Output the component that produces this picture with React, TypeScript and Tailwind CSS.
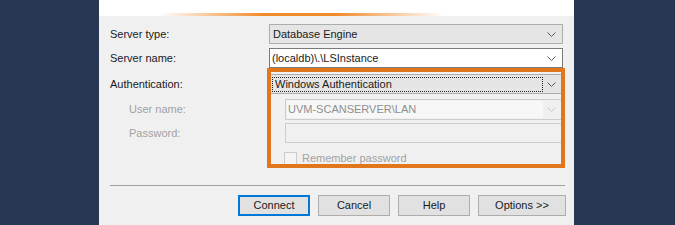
import type { ReactNode } from "react";

const font = "font-['Liberation_Sans',Arial,sans-serif]";

function Chevron({ light }: { light?: boolean }) {
  return (
    <svg width="9" height="5" viewBox="0 0 9 5" className="shrink-0">
      <path
        d="M0.5 0.5 L4.5 4.5 L8.5 0.5"
        fill="none"
        stroke={light ? "#c4c4c4" : "#5a5a5a"}
        strokeWidth="1"
      />
    </svg>
  );
}

function Row({
  label,
  indent,
  muted,
  className,
  children,
}: {
  label: string;
  indent?: boolean;
  muted?: boolean;
  className?: string;
  children: ReactNode;
}) {
  return (
    <div className={`flex items-center ${className ?? ""}`}>
      <div
        className={`shrink-0 ${indent ? "w-[140px] ml-[19px]" : "w-[159px]"} ${
          muted ? "text-[#a2a2a2]" : "text-[#1a1a1a]"
        }`}
      >
        {label}
      </div>
      {children}
    </div>
  );
}

function Button({ children, primary, wide }: { children: ReactNode; primary?: boolean; wide?: boolean }) {
  return (
    <div
      className={`h-[21px] ${wide ? "w-[88px]" : "w-[72px]"} flex items-center justify-center bg-[#e1e1e1] text-[#1a1a1a] ${
        primary ? "border-2 border-[#0078d7]" : "border border-[#adadad]"
      }`}
    >
      {children}
    </div>
  );
}

export default function App() {
  return (
    <div className={`w-[675px] h-[225px] bg-[#283752] flex overflow-hidden ${font} text-[11px]`}>
      <div className="relative ml-[99px] w-[475px] h-full bg-[#f0f0f0] flex flex-col">
        <div className="h-[13px] bg-white shrink-0" />
        <div className="h-[3px] shrink-0 bg-white">
          <div className="h-full bg-[linear-gradient(to_right,rgba(240,138,42,0)_60px,#f08a2a_165px,#f08a2a_235px,rgba(240,138,42,0)_345px)]" />
        </div>

        <div className="pl-[11px] flex flex-col">
          <Row label="Server type:" className="mt-[8px]">
            <div className="h-[20px] w-[294px] bg-[#e5e5e5] border border-[#adadad] flex items-center justify-between pl-[3px] pr-[6px] text-[#1a1a1a]">
              <span>Database Engine</span>
              <Chevron />
            </div>
          </Row>

          <Row label="Server name:" className="mt-[4px]">
            <div className="h-[20px] w-[294px] bg-white border border-[#7a7a7a] flex items-center justify-between pl-[2px] pr-[6px] text-[#1a1a1a]">
              <span>(localdb)\.\LSInstance</span>
              <Chevron />
            </div>
          </Row>

          <Row label="Authentication:" className="mt-[6px]">
            <div className="h-[20px] w-[294px] bg-[#e5e5e5] border border-[#adadad] flex items-center justify-between pl-[2px] pr-[6px] text-[#1a1a1a]">
              <span className="h-[15px] w-[271px] border border-dotted border-[#222] flex items-center pl-[2px]">
                Windows Authentication
              </span>
              <Chevron />
            </div>
          </Row>

          <Row label="User name:" indent muted className="mt-[5px]">
            <div className="ml-[16px] h-[21px] w-[278px] bg-[#f0f0f0] border border-[#cccccc] flex items-center justify-between pl-[1px] pr-[6px]">
              <span className="h-[17px] w-[256px] bg-[#f7f7f7] flex items-center pl-[1px] text-[#8e8e8e]">
                UVM-SCANSERVER\LAN
              </span>
              <Chevron light />
            </div>
          </Row>

          <Row label="Password:" indent muted className="mt-[3px]">
            <div className="ml-[16px] h-[20px] w-[278px] bg-[#f0f0f0] border border-[#cccccc]" />
          </Row>

          <div className="flex items-center mt-[7px] ml-[174px] text-[#a2a2a2]">
            <div className="w-[13px] h-[13px] border border-[#cccccc] bg-[#f4f4f4]" />
            <span className="ml-[5px]">Remember password</span>
          </div>

          <div className="mt-[18px] w-[455px] h-[1px] bg-[#a0a0a0]" />

          <div className="mt-[9px] flex pl-[128px] gap-[8px]">
            <Button primary>Connect</Button>
            <Button>Cancel</Button>
            <Button>Help</Button>
            <Button wide>Options &gt;&gt;</Button>
          </div>
        </div>

        <div className="absolute left-[168px] top-[68px] w-[298px] h-[100px] border-[4px] border-[#e2761c] pointer-events-none" />
      </div>
    </div>
  );
}
